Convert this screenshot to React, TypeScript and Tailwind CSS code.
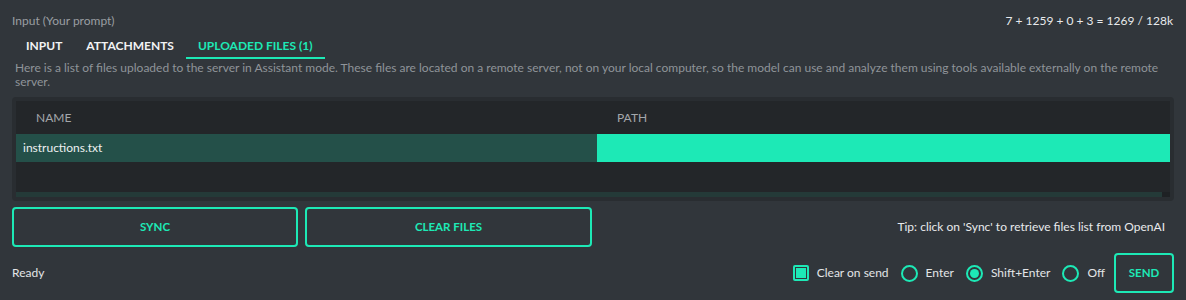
export default function App() {
  const radios = [
    { label: "Enter", on: false },
    { label: "Shift+Enter", on: true },
    { label: "Off", on: false },
  ];

  return (
    <div
      className="h-[300px] w-[1186px] bg-[#31363b] px-3 pt-[14px] text-[12px] text-[#e3e5e7]"
      style={{ fontFamily: "Lato, 'Noto Sans', sans-serif" }}
    >
      <div className="flex h-[14px] items-center justify-between">
        <span className="text-[#9a9ea2]">Input (Your prompt)</span>
        <span className="pr-[1px] text-[#e8eaec]">7 + 1259 + 0 + 3 = 1269 / 128k</span>
      </div>

      {/* tabs */}
      <div className="mt-[7px] flex pl-[2px] font-bold">
        <div className="flex h-[24px] items-center border-b-2 border-transparent px-3 text-[#f2f3f4]">INPUT</div>
        <div className="flex h-[24px] items-center border-b-2 border-transparent px-3 text-[#f2f3f4]">ATTACHMENTS</div>
        <div className="flex h-[24px] items-center border-b-2 border-[#1de9b6] px-3 text-[#1de9b6]">UPLOADED FILES (1)</div>
      </div>

      <p className="mt-[2px] pl-[3px] leading-[14px] text-[#8f9499]">
        Here is a list of files uploaded to the server in Assistant mode. These files are located on a remote server, not on your local computer, so the model can use and analyze them using tools available externally on the remote server.
      </p>

      {/* table */}
      <div className="mt-[8px] h-[104px] rounded-[4px] bg-[#292d31] p-1">
        <div className="flex h-full flex-col bg-[#232629]">
          <div className="flex h-[33px] items-center text-[#a3a7ab]">
            <div className="w-[581px] pl-[20px]">NAME</div>
            <div className="pl-[20px]">PATH</div>
          </div>
          <div className="flex h-[28px]">
            <div className="flex w-[581px] items-center bg-[#245049] pl-[7px] text-[#eef0f1]">instructions.txt</div>
            <div className="flex-1 bg-[#1de9b6]" />
          </div>
          <div className="flex-1" />
          <div className="flex h-[5px]">
            <div className="flex-1 bg-[#243a38]" />
            <div className="w-[8px] bg-[#1e2124]" />
          </div>
        </div>
      </div>

      {/* actions */}
      <div className="mt-[6px] flex items-center">
        <button className="h-[40px] w-[286px] rounded-[4px] border-2 border-[#1de9b6] text-[11.5px] font-bold text-[#1de9b6]">SYNC</button>
        <button className="ml-[7px] h-[40px] w-[287px] rounded-[4px] border-2 border-[#1de9b6] text-[11.5px] font-bold text-[#1de9b6]">CLEAR FILES</button>
        <span className="ml-auto pr-[9px] text-[#e8eaec]">Tip: click on 'Sync' to retrieve files list from OpenAI</span>
      </div>

      {/* footer */}
      <div className="mt-[6px] flex h-[40px] items-center">
        <span className="text-[#e3e5e7]">Ready</span>
        <div className="ml-auto flex items-center">
          <div className="flex h-[16px] w-[16px] items-center justify-center rounded-[2px] border-2 border-[#1de9b6]">
            <div className="h-[10px] w-[10px] bg-[#1de9b6]" />
          </div>
          <span className="ml-[8px] mr-[12px]">Clear on send</span>
          {radios.map((r) => (
            <div key={r.label} className="flex items-center">
              <div className="flex h-[17px] w-[17px] items-center justify-center rounded-full border-2 border-[#1de9b6]">
                {r.on && <div className="h-[9px] w-[9px] rounded-full bg-[#1de9b6]" />}
              </div>
              <span className="ml-[8px] mr-[12px]">{r.label}</span>
            </div>
          ))}
          <button className="ml-[-3px] h-[40px] w-[60px] rounded-[4px] border-2 border-[#1de9b6] text-[11.5px] font-bold text-[#1de9b6]">SEND</button>
        </div>
      </div>
    </div>
  );
}
